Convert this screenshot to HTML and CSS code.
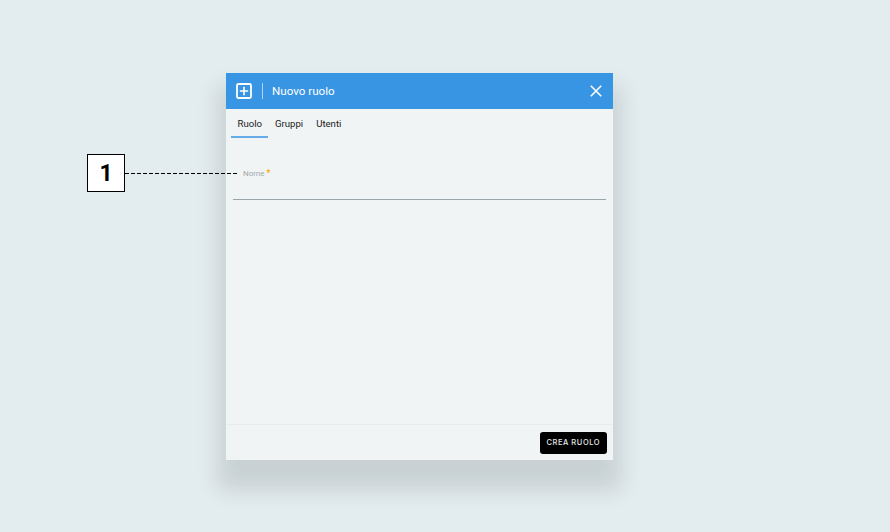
FILE: index.html
```html
<!DOCTYPE html>
<html lang="it">
<head>
    <meta charset="UTF-8">
    <meta name="viewport" content="width=device-width, initial-scale=1.0">
    <title>Nuovo ruolo</title>
    <link rel="stylesheet" href="styles.css">
</head>
<body>
    <div class="dialog">
        <div class="dialog-header">
            <svg class="header-icon" width="16" height="16" viewBox="0 0 16 16" fill="none" stroke="#fff">
                <rect x="1" y="1" width="14" height="14" rx="1.5" stroke-width="1.8"/>
                <path d="M8 3.8v8.4M3.8 8h8.4" stroke-width="1.6"/>
            </svg>
            <span class="header-divider"></span>
            <span class="header-title">Nuovo ruolo</span>
            <svg class="header-close" width="12" height="12" viewBox="0 0 12 12" fill="none" stroke="#fff" stroke-width="1.6">
                <path d="M.8.8l10.4 10.4M11.2.8L.8 11.2"/>
            </svg>
        </div>

        <div class="tabs">
            <div class="tab active">Ruolo</div>
            <div class="tab">Gruppi</div>
            <div class="tab">Utenti</div>
        </div>

        <div class="dialog-body">
            <div class="field">
                <label class="field-label">Nome <span class="required">*</span></label>
            </div>
        </div>

        <div class="dialog-footer">
            <button class="btn-create">CREA RUOLO</button>
        </div>
    </div>

    <!-- Richiamo numerato -->
    <div class="callout">
        <div class="callout-box">1</div>
        <div class="callout-line"></div>
    </div>
</body>
</html>
```

FILE: styles.css
```css
html, body {
    height: 100%;
}
body {
    margin: 0;
    padding: 73px 0 0 226px;
    box-sizing: border-box;
    font-family: Roboto, "Liberation Sans", sans-serif;
    background-color: #e3ecee;
    overflow: hidden;
}
.dialog {
    width: 387px;
    height: 387px;
    display: flex;
    flex-direction: column;
    background-color: #f0f4f5;
    box-shadow: 0 22px 20px 8px rgba(40, 50, 55, 0.14);
}
.dialog-header {
    height: 35.5px;
    flex: none;
    display: flex;
    align-items: center;
    padding: 0 11px 0 10px;
    background-color: #3895e3;
    color: white;
}
.header-divider {
    width: 1px;
    height: 16px;
    margin: 0 9px 0 10px;
    background-color: rgba(255, 255, 255, 0.6);
}
.header-title {
    flex: 1;
    font-size: 11.6px;
}
.tabs {
    display: flex;
    height: 29.5px;
    flex: none;
    padding: 0 5px;
}
.tab {
    padding: 9px 6.5px 0;
    font-size: 9.6px;
    line-height: 12px;
    color: #222;
    box-sizing: border-box;
}
.tab.active {
    border-bottom: 2px solid rgba(56, 149, 227, 0.75);
}
.dialog-body {
    flex: 1;
    padding: 30px 7px 0;
}
.field {
    height: 32px;
    padding-left: 10px;
    box-sizing: border-box;
    border-bottom: 1px solid #9aa5a9;
}
.field-label {
    display: block;
    font-size: 8px;
    line-height: 10px;
    color: #a3a8ab;
}
.required {
    color: #f7a800;
    font-weight: bold;
    font-size: 8.5px;
}
.dialog-footer {
    height: 35px;
    flex: none;
    display: flex;
    justify-content: flex-end;
    align-items: center;
    padding: 0 6.5px;
    border-top: 1px solid #e8eced;
}
.btn-create {
    width: 66.5px;
    height: 22px;
    padding: 0;
    border: none;
    border-radius: 3px;
    background-color: black;
    color: #e6e6e6;
    font-family: Inter, sans-serif;
    font-size: 7.5px;
    font-weight: 500;
    letter-spacing: 0.55px;
}
.callout {
    position: absolute;
    left: 87px;
    top: 154px;
    display: flex;
    align-items: center;
}
.callout-box {
    width: 36px;
    height: 36px;
    border: 1px solid black;
    background-color: white;
    text-align: center;
    font-family: Roboto, sans-serif;
    font-size: 23px;
    font-weight: 700;
    line-height: 37px;
    color: black;
}
.callout-line {
    width: 113px;
    height: 1px;
    background: repeating-linear-gradient(to right, black 0 4px, transparent 4px 6px);
}
```
